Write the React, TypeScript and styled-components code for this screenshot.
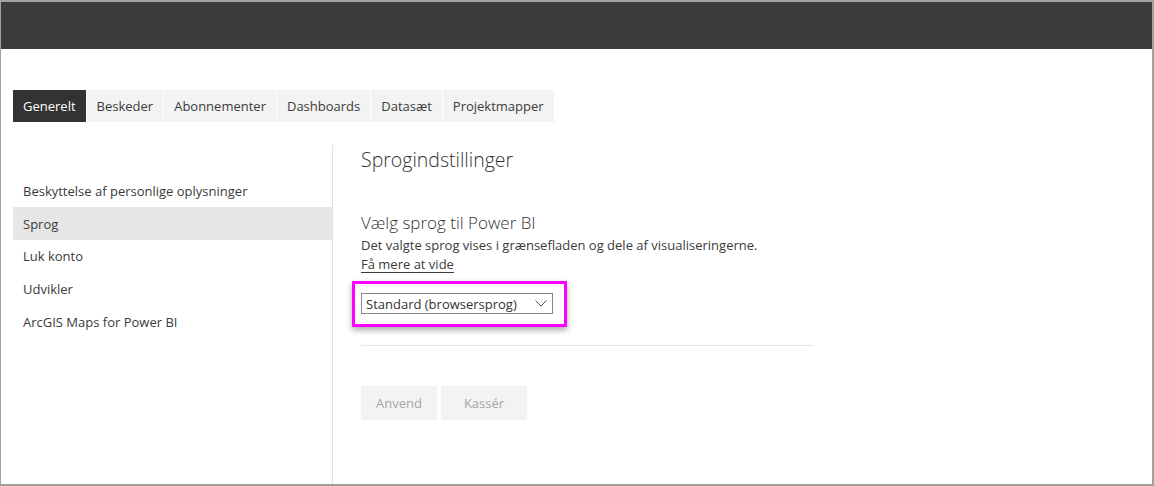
import React from "react";
import styled, { createGlobalStyle } from "styled-components";

const Global = createGlobalStyle`
  html, body { margin: 0; padding: 0; background: #ffffff; }
  body { font-family: "Open Sans", "Noto Sans", sans-serif; color: #3b3b3b; }
  * { box-sizing: border-box; }
`;

const Frame = styled.div`
  width: 1154px;
  height: 486px;
  border-style: solid;
  border-color: #a0a0a0;
  border-width: 2px 2px 2px 1px;
  display: flex;
  flex-direction: column;
  overflow: hidden;
`;

const TopBar = styled.div`
  height: 47px;
  flex: none;
  background: #3c3b39;
`;

const Tabs = styled.nav`
  display: flex;
  gap: 1px;
  margin: 41px 0 0 12px;
  height: 32px;
  flex: none;
`;

const Tab = styled.div<{ $active?: boolean }>`
  display: flex;
  align-items: center;
  padding: 0 10px;
  font-size: 13px;
  background: ${(p) => (p.$active ? "#333333" : "#f3f3f3")};
  color: ${(p) => (p.$active ? "#ffffff" : "#3b3b3b")};
`;

const Body = styled.div`
  display: flex;
  flex: 1;
  margin-top: 23px;
  padding-left: 12px;
`;

const SideNav = styled.ul`
  list-style: none;
  margin: 0;
  padding: 29.5px 0 0;
  width: 320px;
  border-right: 1px solid #e1e1e1;
`;

const NavItem = styled.li<{ $active?: boolean }>`
  height: 32.75px;
  display: flex;
  align-items: center;
  padding-left: 10px;
  font-size: 13px;
  color: #3b3b3b;
  background: ${(p) => (p.$active ? "#e6e6e6" : "transparent")};
`;

const Content = styled.section`
  display: flex;
  flex-direction: column;
  padding: 1px 0 0 28px;
  width: 482px;
`;

const Title = styled.h1`
  margin: 0;
  font-size: 19.5px;
  font-weight: 300;
  line-height: 28px;
  color: #333333;
`;

const SubTitle = styled.h2`
  margin: 38px 0 0;
  font-size: 17px;
  font-weight: 300;
  line-height: 22px;
  color: #333333;
`;

const Description = styled.p`
  margin: 2px 0 0;
  font-size: 13px;
  line-height: 18px;
  color: #3b3b3b;
`;

const Link = styled.a`
  align-self: flex-start;
  margin-top: 1px;
  font-size: 13px;
  line-height: 18px;
  color: #3b3b3b;
  text-decoration: underline;
  text-underline-offset: 3px;
`;

const SelectWrap = styled.div`
  position: relative;
  align-self: flex-start;
  margin-top: 20px;
`;

const Highlight = styled.div`
  position: absolute;
  top: -12px;
  left: -9px;
  right: -14px;
  bottom: -13px;
  border: 3px solid #ff00ff;
  box-shadow: 0 3px 6px rgba(0, 0, 0, 0.35);
  pointer-events: none;
`;

const SelectBox = styled.div`
  width: 192px;
  height: 21px;
  border: 1px solid #8a8886;
  display: flex;
  align-items: center;
  justify-content: space-between;
  padding: 0 5px 0 4px;
  font-size: 13px;
  color: #333333;
  background: #ffffff;
`;

const Divider = styled.hr`
  margin: 31px 0 0;
  border: none;
  border-top: 1px solid #e6e6e6;
  width: 453px;
`;

const Buttons = styled.div`
  display: flex;
  gap: 4px;
  margin-top: 40px;
`;

const Button = styled.button<{ $w: number }>`
  width: ${(p) => p.$w}px;
  height: 34px;
  border: none;
  background: #f3f3f3;
  color: #a6a6a6;
  font-family: inherit;
  font-size: 13px;
  padding: 0;
`;

const Chevron = () => (
  <svg width="12" height="7" viewBox="0 0 12 7" fill="none">
    <polyline points="0.5,0.5 6,6 11.5,0.5" stroke="#555" strokeWidth="1" />
  </svg>
);

const tabs = ["Generelt", "Beskeder", "Abonnementer", "Dashboards", "Datasæt", "Projektmapper"];
const nav = [
  "Beskyttelse af personlige oplysninger",
  "Sprog",
  "Luk konto",
  "Udvikler",
  "ArcGIS Maps for Power BI",
];

export default function App() {
  return (
    <>
      <Global />
      <Frame>
        <TopBar />
        <Tabs>
          {tabs.map((t, i) => (
            <Tab key={t} $active={i === 0}>
              {t}
            </Tab>
          ))}
        </Tabs>
        <Body>
          <SideNav>
            {nav.map((n) => (
              <NavItem key={n} $active={n === "Sprog"}>
                {n}
              </NavItem>
            ))}
          </SideNav>
          <Content>
            <Title>Sprogindstillinger</Title>
            <SubTitle>Vælg sprog til Power BI</SubTitle>
            <Description>Det valgte sprog vises i grænsefladen og dele af visualiseringerne.</Description>
            <Link href="#">Få mere at vide</Link>
            <SelectWrap>
              <SelectBox>
                <span>Standard (browsersprog)</span>
                <Chevron />
              </SelectBox>
              <Highlight />
            </SelectWrap>
            <Divider />
            <Buttons>
              <Button $w={76}>Anvend</Button>
              <Button $w={86}>Kassér</Button>
            </Buttons>
          </Content>
        </Body>
      </Frame>
    </>
  );
}
